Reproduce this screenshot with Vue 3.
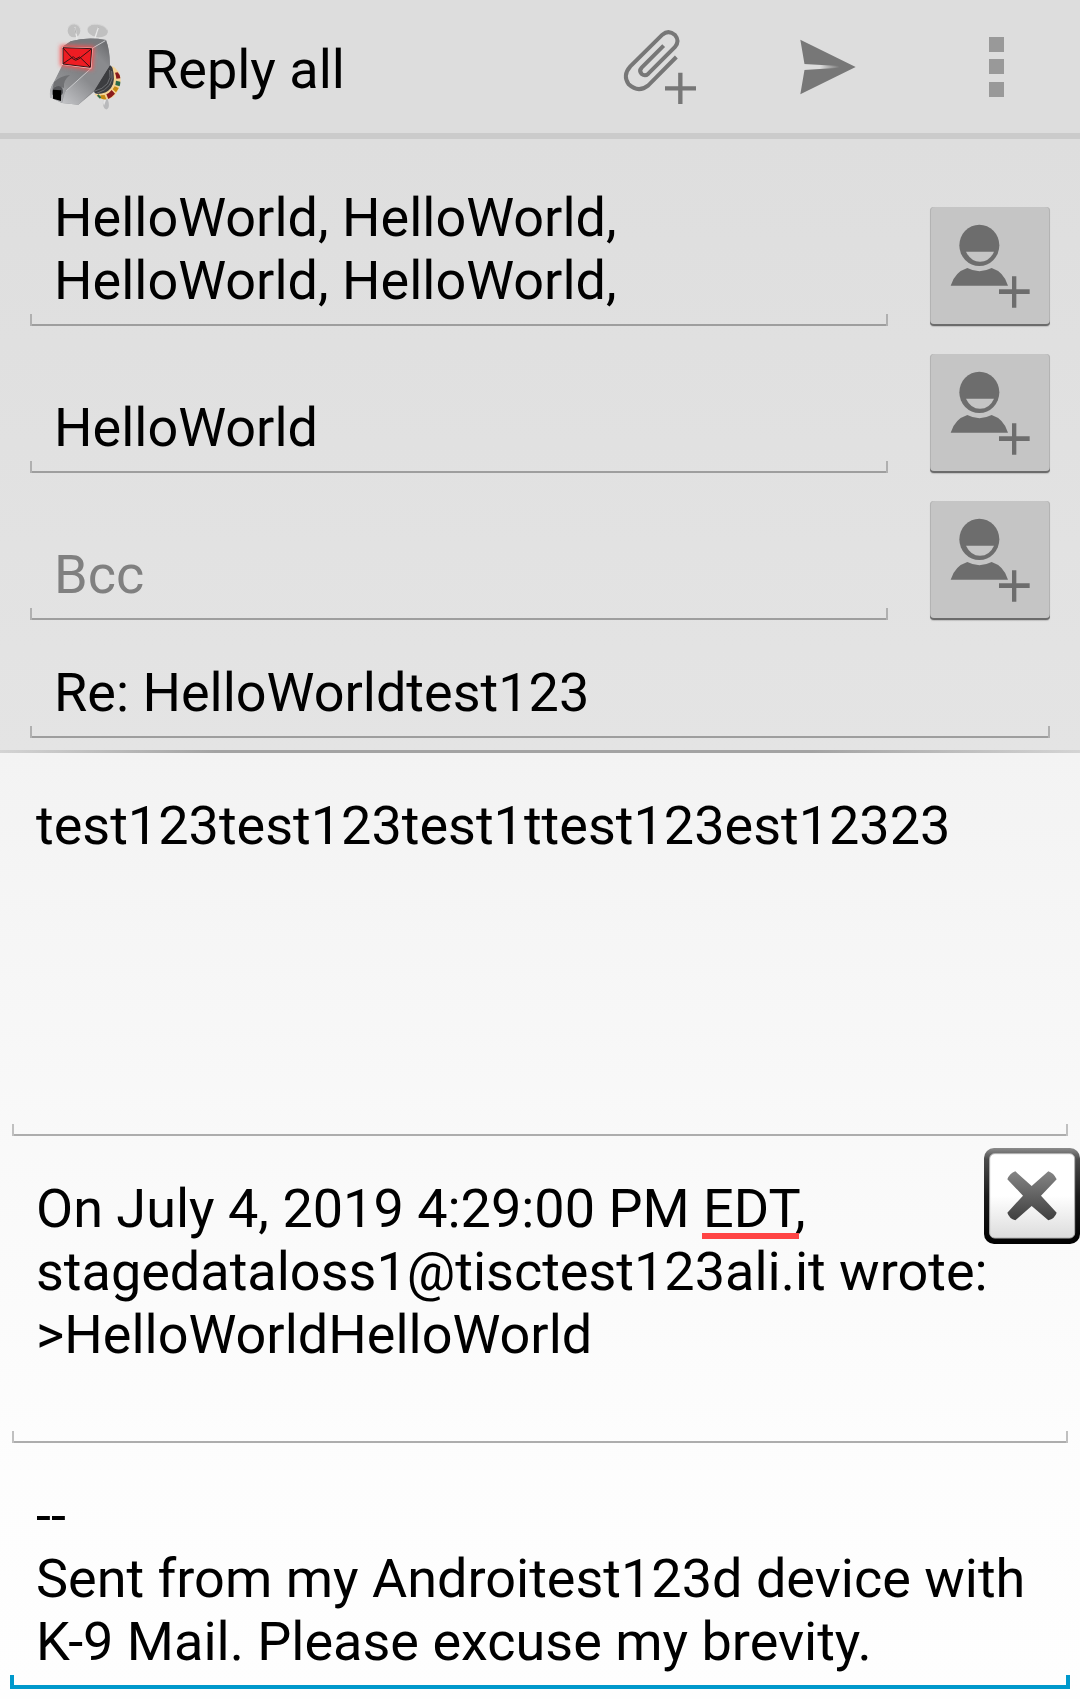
<script setup>
import { ref } from 'vue'

const recipients = ref([
  { id: 'to', label: 'To', placeholder: 'To', rows: 2, value: 'HelloWorld, HelloWorld, HelloWorld, HelloWorld, ' },
  { id: 'cc', label: 'Cc', placeholder: 'Cc', rows: 1, value: 'HelloWorld' },
  { id: 'bcc', label: 'Bcc', placeholder: 'Bcc', rows: 1, value: '' }
])
const subject = ref('Re: HelloWorldtest123')
const message = ref('test123test123test1ttest123est12323')
const quoted = ref(
  'On July 4, 2019 4:29:00 PM EDT, stagedataloss1@tisctest123ali.it wrote:\n>HelloWorldHelloWorld\n'
)
const signature = ref('--\nSent from my Androitest123d device with K-9 Mail. Please excuse my brevity.')
</script>

<template>
  <div class="screen">
    <header class="bar">
      <svg class="logo" viewBox="0 0 270 309" aria-hidden="true">
        <defs>
          <linearGradient id="head" x1="0" y1="0" x2="1" y2="1">
            <stop offset="0" stop-color="#77787b" />
            <stop offset=".5" stop-color="#9a9b9e" />
            <stop offset="1" stop-color="#77787b" />
          </linearGradient>
          <linearGradient id="snout" x1="0" y1="1" x2="1" y2="0">
            <stop offset="0" stop-color="#c4c5c8" />
            <stop offset=".45" stop-color="#8d8e91" />
            <stop offset="1" stop-color="#77787b" />
          </linearGradient>
          <linearGradient id="cheek" x1=".1" y1="1" x2=".8" y2="0">
            <stop offset="0" stop-color="#bfc0c3" />
            <stop offset=".45" stop-color="#8a8b8e" />
            <stop offset=".8" stop-color="#8a8b8e" />
            <stop offset="1" stop-color="#6f7073" />
          </linearGradient>
          <filter id="glow" x="-30%" y="-40%" width="160%" height="180%">
            <feGaussianBlur stdDeviation="6" />
          </filter>
        </defs>
        <path d="M190 250q-4 20 3 30q8 8 13-3q3-12-5-28z" fill="#b9babc" />
        <path d="M190 252q-2 12 2 20l8-22z" fill="#e6e6e6" />
        <path d="M204 145L220 160Q232 190 215 220Q200 240 172 240L155 225z" fill="#3c3d40" />
        <path d="M209 165Q220 214 160 230M215 168Q226 218 168 236" fill="none" stroke="#8a8b8e" stroke-width="2" />
        <path d="M216 152Q242 166 242 197Q238 228 219 246Q200 259 175 248L162 236Q196 240 213 219Q229 198 216 152z" fill="#f5d394" />
        <path d="M233 172Q240 178 241 190L229 191Q228 181 225 173z" fill="#8a1a1c" />
        <path d="M228 197L241 200Q241 208 239 214L226 210z" fill="#2b6a49" />
        <path d="M224 214L236 219Q232 227 228 232L218 223z" fill="#c68a12" />
        <path d="M215 225L225 236Q215 247 205 252L199 238Q208 234 215 225z" fill="#8a1a1c" />
        <path d="M194 240L199 253Q191 254 184 251L181 241z" fill="#c68a12" />
        <path d="M173 240L182 249" stroke="#2b6a49" stroke-width="6" />
        <ellipse cx="102" cy="47" rx="19" ry="20" fill="#c0c0c0" />
        <path d="M84 38q6-12 20-11t17 14" fill="none" stroke="#d4d4d4" stroke-width="3" />
        <ellipse cx="173" cy="47" rx="31" ry="19" fill="#c0c0c0" transform="rotate(9 173 47)" />
        <path d="M143 38q8-13 30-10t29 17" fill="none" stroke="#d6d6d6" stroke-width="3" />
        <path d="M104 36l9 43" stroke="#e8e8e8" stroke-width="4" />
        <path d="M104 38l4 18M176 37l-6 18" stroke="#999" stroke-width="2" />
        <path d="M175 38l-14 42" stroke="#e8e8e8" stroke-width="4" />
        <path d="M67 96L92 79Q140 65 198 75Q209 102 210 150L160 232L115 269L66 264L30 247Q28 219 42 201L67 155z" fill="url(#head)" />
        <path d="M67 96L92 79Q140 65 198 75Q182 86 158 99z" fill="#77787b" />
        <path d="M158 99L198 75Q209 102 210 150L162 225L115 269L66 264L75 230L153 160z" fill="url(#cheek)" />
        <path d="M67 150L42 201Q27 222 30 247L66 264Q68 240 79 226L153 160z" fill="url(#snout)" />
        <path d="M90 180Q68 197 72 219L56 214Q42 211 37 224L42 201Q60 183 90 180z" fill="#707174" />
        <path d="M196 77l-38 22l-5 61L79 227" fill="none" stroke="#c9cacc" stroke-width="3" />
        <path d="M37 228q2-15 20-15q13 2 12 20l-3 6H37z" fill="#55565a" />
        <path d="M39 224L64 226L63 258L39 251z" fill="#000" />
        <path d="M66 96L157 99L153 160L66 148z" fill="#ff2a2a" stroke="#ff5555" stroke-width="10" filter="url(#glow)" />
        <path d="M66 95L158 98L154 161L65 149z" fill="#f9c7c7" />
        <path d="M69 98L155 101L151 157L69 147z" fill="#ee1c23" stroke="#3a1214" stroke-width="3" />
        <path d="M69 99L98 131Q107 140 116 132L154 102M69 146L100 125L107 132L119 126L150 156" fill="none" stroke="#3a1214" stroke-width="3" />
      </svg>
      <h1 class="title">Reply all</h1>
      <button class="action" type="button" aria-label="Add attachment">
        <svg viewBox="0 0 504 399" aria-hidden="true">
          <g transform="translate(72 30)" fill="none" stroke="#777" stroke-width="12">
            <path d="M191 107L125 173Q116 183 125 192Q135 200 145 191L225 111Q240 93 225 75Q206 58 187 74L91 169Q67 196 86 223Q115 250 145 226L229 141" />
            <path d="M241 188v94M195 235h93" stroke-width="13" />
          </g>
        </svg>
      </button>
      <button class="action" type="button" aria-label="Send">
        <svg viewBox="0 0 504 399" aria-hidden="true">
          <defs>
            <linearGradient id="slit" x1="0" x2="1">
              <stop offset="0" stop-color="#ddd" />
              <stop offset=".45" stop-color="#ddd" />
              <stop offset="1" stop-color="#777" />
            </linearGradient>
          </defs>
          <g transform="translate(-432 30)">
            <path d="M601 89L767 171L601 253L615 171z" fill="#777" />
            <path d="M612 162L718 168V173L612 180z" fill="url(#slit)" />
          </g>
        </svg>
      </button>
      <button class="action" type="button" aria-label="More options">
        <svg viewBox="0 0 504 399" aria-hidden="true">
          <path d="M231 111h45v45h-45zM231 177h45v45h-45zM231 246h45v45h-45z" fill="#999" />
        </svg>
      </button>
    </header>

    <main>
      <section class="envelope">
        <div v-for="field in recipients" :key="field.id" class="row">
          <textarea
            v-model="field.value"
            class="field"
            :rows="field.rows"
            :placeholder="field.placeholder"
            :aria-label="field.label"
            spellcheck="false"
          ></textarea>
          <button class="contact" type="button" :aria-label="'Add contact to ' + field.label">
            <svg viewBox="0 0 360 357" aria-hidden="true">
              <g transform="translate(-90 -50)" fill="#6d6d6d">
                <ellipse cx="238" cy="165" rx="60" ry="62" />
                <path d="M198 184H282Q269 214 240 214Q212 214 198 184z" fill="#c5c5c5" />
                <path d="M152 286Q164 245 202 233Q238 252 275 233Q312 245 324 286z" />
                <path d="M336 258h13v39h40v14h-40v41h-13v-41h-39v-14h39z" />
              </g>
            </svg>
          </button>
        </div>
        <input v-model="subject" class="field subject" type="text" aria-label="Subject" spellcheck="false" />
      </section>

      <section class="content">
        <textarea v-model="message" class="field message" aria-label="Message text" spellcheck="false"></textarea>
        <div class="quote">
          <textarea v-model="quoted" class="field" rows="4" aria-label="Quoted text" spellcheck="false"></textarea>
          <span class="misspelled"></span>
          <button class="remove" type="button" aria-label="Remove quoted text">
            <svg viewBox="0 0 288 288" aria-hidden="true">
              <defs>
                <linearGradient id="frame" x1="0" y1="0" x2="0" y2="1">
                  <stop offset="0" stop-color="#8c8c8c" />
                  <stop offset=".12" stop-color="#4a4a4a" />
                  <stop offset=".5" stop-color="#1c1c1c" />
                  <stop offset="1" stop-color="#000" />
                </linearGradient>
                <linearGradient id="face" x1="0" y1="0" x2="0" y2="1">
                  <stop offset=".5" stop-color="#fff" />
                  <stop offset="1" stop-color="#dcdcdc" />
                </linearGradient>
                <linearGradient id="cross" gradientUnits="userSpaceOnUse" x1="0" y1="70" x2="0" y2="218">
                  <stop offset="0" stop-color="#858585" />
                  <stop offset="1" stop-color="#3e3e3e" />
                </linearGradient>
              </defs>
              <rect width="288" height="288" rx="30" fill="url(#frame)" />
              <rect x="17" y="17" width="255" height="253" rx="15" fill="url(#face)" stroke="#b5b5b5" stroke-width="3" />
              <path
                d="M94 70L143 114L193 70Q209 75 218 94L171 143L218 194Q212 212 193 217L143 174L94 217Q76 212 70 194L117 143L70 94Q77 76 94 70z"
                fill="url(#cross)"
              />
            </svg>
          </button>
        </div>
        <textarea v-model="signature" class="field active" rows="3" aria-label="Signature" spellcheck="false"></textarea>
      </section>
    </main>
  </div>
</template>

<style>
body {
  margin: 0;
  background: #fefefe;
}
</style>

<style scoped>
.screen {
  min-height: 100vh;
  box-sizing: border-box;
  display: flex;
  flex-direction: column;
  font-family: Roboto, 'Liberation Sans', sans-serif;
  font-size: 54px;
  line-height: 63px;
  color: #000;
}

button {
  margin: 0;
  padding: 0;
  border: 0;
  background: none;
  cursor: pointer;
}

svg {
  display: block;
}

.bar {
  display: flex;
  align-items: center;
  height: 133px;
  padding-left: 40px;
  background: #ddd;
  border-bottom: 6px solid #cbcbcb;
}

.logo {
  width: 90px;
  height: 103px;
  flex: none;
}

.title {
  flex: 1;
  margin: 0;
  padding: 6px 0 0 15px;
  font-size: 54px;
  font-weight: 400;
  white-space: nowrap;
}

.action {
  width: 168px;
  flex: none;
}

.envelope {
  display: flex;
  flex-direction: column;
  gap: 28px;
  padding: 47px 30px 12px;
  background: linear-gradient(#dedede, #e4e4e4);
}

.row {
  display: flex;
  align-items: flex-end;
  gap: 42px;
}

.field {
  --line: #9e9e9e;
  --tick: #b0b0b0;
  display: block;
  box-sizing: border-box;
  width: 100%;
  min-width: 0;
  margin: 0;
  padding: 0 24px 14px;
  border: 0;
  border-radius: 0;
  outline: none;
  resize: none;
  overflow: hidden;
  font: inherit;
  color: inherit;
  background:
    linear-gradient(var(--tick), var(--tick)) left bottom / 2px 12px no-repeat,
    linear-gradient(var(--tick), var(--tick)) right bottom / 2px 12px no-repeat,
    linear-gradient(var(--line), var(--line)) left bottom / 100% 2px no-repeat;
}

.field::placeholder {
  color: #808080;
  opacity: 1;
}

.row .field {
  flex: 1;
}

.subject {
  height: 77px;
  margin-top: 13px;
}

.contact {
  flex: none;
  width: 120px;
  height: 119px;
  border-radius: 4px;
  background: #c5c5c5;
  box-shadow: inset 0 -2px 0 #6b6b6b, inset 1px 0 0 #b3b3b3, inset -1px 0 0 #b3b3b3, 0 1px 1px #c0c0c0;
}

.content {
  display: flex;
  flex-direction: column;
  gap: 41px;
  padding: 41px 12px 10px;
  border-style: solid;
  border-width: 3px 0 0;
  border-image: linear-gradient(90deg, #d4d4d4, #a3a3a3 20%, #a3a3a3 75%, #d4d4d4) 1;
  background: linear-gradient(#f3f3f3, #f9f9f9 42%, #fdfdfd 76%, #fefefe);
}

.content .field {
  --line: #adadad;
  --tick: #c0c0c0;
}

.message {
  height: 342px;
}

.quote {
  position: relative;
}

.misspelled {
  position: absolute;
  left: 690px;
  top: 56px;
  width: 97px;
  height: 6px;
  background: #ff4444;
}

.remove {
  position: absolute;
  right: -12px;
  top: -29px;
  width: 96px;
  height: 96px;
}

.content .active {
  width: auto;
  margin: 0 -2px;
  padding: 0 26px 16px;
  background:
    linear-gradient(#09c, #09c) left bottom / 4px 14px no-repeat,
    linear-gradient(#09c, #09c) right bottom / 4px 14px no-repeat,
    linear-gradient(#09c, #09c) left bottom / 100% 4px no-repeat;
}
</style>
